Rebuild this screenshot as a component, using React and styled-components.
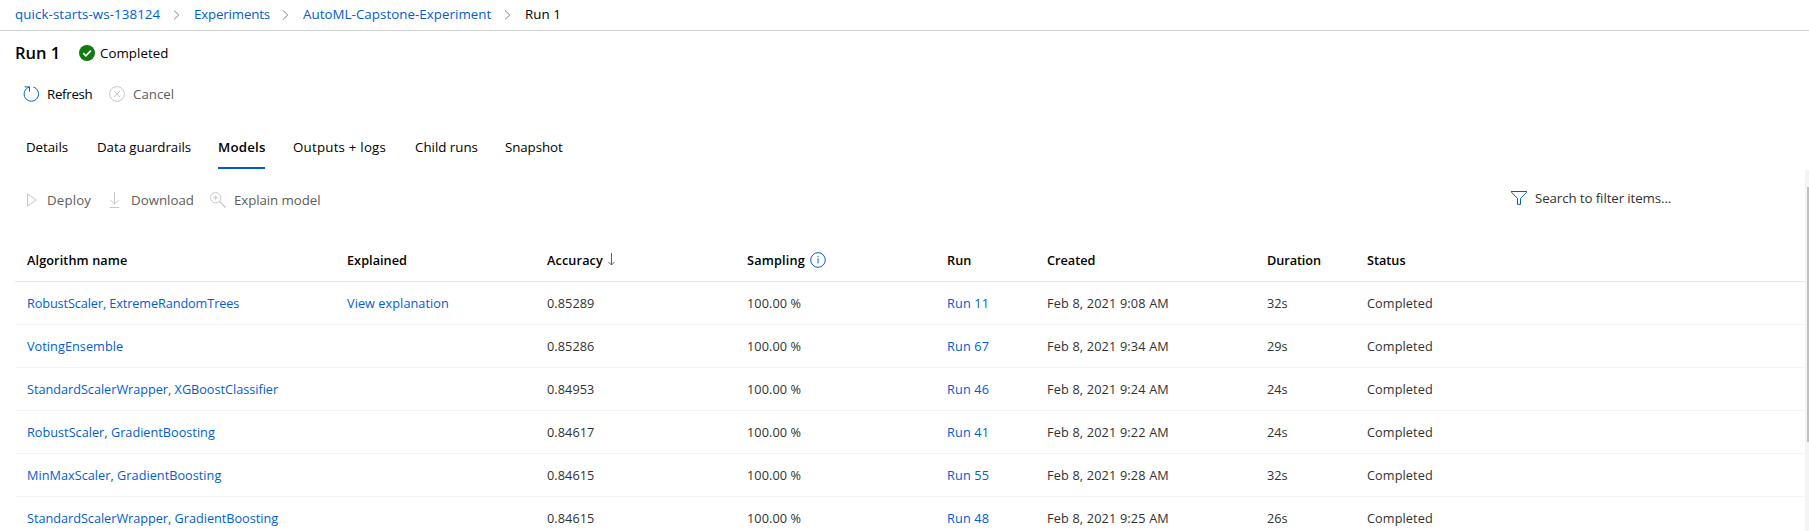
import React from "react";
import styled, { createGlobalStyle } from "styled-components";

const LINK = "#015cda";
const MUTED = "#605e5c";

const GlobalStyle = createGlobalStyle`
  *, *::before, *::after { box-sizing: border-box; }
  body {
    margin: 0;
    background: #fff;
    color: #000;
    font-family: "Open Sans", "Noto Sans", sans-serif;
    font-size: 13.3px;
    line-height: 20px;
    overflow: hidden;
  }
`;

const Page = styled.div`
  display: flex;
  flex-direction: column;
  height: 531px;
  overflow: hidden;
  white-space: nowrap;
`;

const Label = styled.span`
  letter-spacing: ${(p) => p.$track || 0}px;
`;

const Breadcrumb = styled.nav`
  display: flex;
  align-items: center;
  flex: none;
  height: 31px;
  padding: 0 0 2px 15px;
  border-bottom: 1px solid #d2d2d2;
`;

const Crumb = styled.span`
  flex: none;
  width: ${(p) => p.$width}px;
  color: ${(p) => (p.$current ? "#000" : LINK)};
`;

const CrumbIcon = styled.svg`
  flex: none;
  width: 7px;
  height: 10px;
  margin: 1px 14px 0;
  fill: none;
  stroke: #8a8886;
`;

const TitleRow = styled.header`
  display: flex;
  align-items: center;
  flex: none;
  height: 20px;
  margin-top: 12px;
  padding-left: 15px;
`;

const Title = styled.h1`
  width: 64px;
  margin: 0;
  font-size: 16.5px;
  font-weight: 600;
  line-height: 20px;
`;

const Icon = styled.svg`
  flex: none;
  width: 16px;
  height: 16px;
  fill: none;
  stroke: ${(p) => p.$color || "#c8c6c8"};
`;

const RunStatus = styled.div`
  display: flex;
  align-items: center;
  gap: 5px;
`;

const CommandBar = styled.div`
  display: flex;
  align-items: center;
  flex: none;
  height: 32px;
  margin-top: ${(p) => p.$top}px;
  padding-left: 23px;
`;

const Command = styled.button`
  display: flex;
  align-items: center;
  gap: 8px;
  flex: none;
  width: ${(p) => p.$width}px;
  height: 32px;
  padding: 0;
  border: 0;
  background: none;
  font: inherit;
  color: ${(p) => (p.$enabled ? "#000" : MUTED)};
`;

const Tabs = styled.div`
  display: flex;
  flex: none;
  gap: 28px;
  margin-top: 15px;
  padding-left: 26px;
`;

const Tab = styled.div`
  flex: none;
  width: ${(p) => p.$width}px;
  height: 44px;
  padding-top: 2px;
  line-height: 40px;
  font-weight: ${(p) => (p.$active ? 600 : 400)};
  border-bottom: 2px solid ${(p) => (p.$active ? LINK : "transparent")};
`;

const Panel = styled.main`
  display: flex;
  flex: 1;
  min-height: 0;
  margin-top: 1px;
`;

const PanelBody = styled.div`
  flex: 1;
  min-width: 0;
  overflow: hidden;
`;

const ScrollTrack = styled.div`
  display: flex;
  justify-content: flex-end;
  flex: none;
  width: 4px;
  padding-top: 17px;
  background: #f5f3f6;
`;

const ScrollThumb = styled.div`
  width: 2px;
  height: 255px;
  background: #c1bfc2;
`;

const Search = styled.div`
  display: flex;
  align-items: center;
  gap: 8px;
  width: 294px;
  height: 28px;
  margin: 0 0 4px auto;
  color: #323130;
`;

const Table = styled.div`
  margin: 23px 0 0 15px;
  font-size: 12.7px;
`;

const Row = styled.div`
  display: grid;
  grid-template-columns: 320px 200px 200px 200px 100px 220px 100px 1fr;
  align-items: center;
  height: 43px;
  color: ${(p) => (p.$head ? "#000" : "#323130")};
  font-weight: ${(p) => (p.$head ? 600 : 400)};
  border-bottom: 1px solid ${(p) => (p.$head ? "#e9e8e9" : "#f4f3f4")};
`;

const Cell = styled.div`
  display: flex;
  align-items: center;
  padding-left: 12px;
  letter-spacing: ${(p) => p.$track || 0}px;
  color: ${(p) => (p.$link ? LINK : "inherit")};
`;

const SortArrow = styled.svg`
  width: 7px;
  height: 13px;
  margin: -1px 0 0 5px;
  fill: none;
  stroke: #605e5c;
`;

const InfoIcon = styled(Icon)`
  margin: -1px 0 0 5px;
`;

const Chevron = () => (
  <CrumbIcon viewBox="0 0 7 10"><path d="M1 .5 5.8 5 1 9.5" /></CrumbIcon>
);

const tabs = [
  ["Details", 43, -0.04],
  ["Data guardrails", 93, -0.05],
  ["Models", 47, 0.18],
  ["Outputs + logs", 94, 0.22],
  ["Child runs", 62, 0],
  ["Snapshot", 60, -0.08],
];

const columns = [
  ["Algorithm name", 0.1],
  ["Explained", 0.03],
  ["Accuracy", 0.12],
  ["Sampling", 0.17],
  ["Run", 0.1],
  ["Created", 0],
  ["Duration", -0.07],
  ["Status", 0],
];

const models = [
  ["RobustScaler, ExtremeRandomTrees", -0.1, "View explanation", "0.85289", "Run 11", "9:08", "32s"],
  ["VotingEnsemble", 0.05, "", "0.85286", "Run 67", "9:34", "29s"],
  ["StandardScalerWrapper, XGBoostClassifier", -0.02, "", "0.84953", "Run 46", "9:24", "24s"],
  ["RobustScaler, GradientBoosting", 0.01, "", "0.84617", "Run 41", "9:22", "24s"],
  ["MinMaxScaler, GradientBoosting", 0.03, "", "0.84615", "Run 55", "9:28", "32s"],
  ["StandardScalerWrapper, GradientBoosting", -0.02, "", "0.84615", "Run 48", "9:25", "26s"],
];

export default function App() {
  return (
    <Page>
      <GlobalStyle />
      <Breadcrumb>
        <Crumb $width={144}><Label $track={0.1}>quick-starts-ws-138124</Label></Crumb>
        <Chevron />
        <Crumb $width={74}><Label $track={-0.16}>Experiments</Label></Crumb>
        <Chevron />
        <Crumb $width={187}><Label $track={0.06}>AutoML-Capstone-Experiment</Label></Crumb>
        <Chevron />
        <Crumb $width={40} $current><Label $track={0.08}>Run 1</Label></Crumb>
      </Breadcrumb>

      <TitleRow>
        <Title>Run 1</Title>
        <RunStatus>
          <Icon viewBox="0 0 16 16" $color="#fff">
            <circle cx="8" cy="8" r="8" fill="#107c10" stroke="none" />
            <path d="m4.2 8.1 2.7 2.7 5-5.1" strokeWidth="1.7" />
          </Icon>
          <Label $track={0.06}>Completed</Label>
        </RunStatus>
      </TitleRow>

      <CommandBar $top={15}>
        <Command $width={86} $enabled>
          <Icon viewBox="0 0 16 16" $color={LINK}>
            <path d="M1.7.9h4.8v4.8M6.3 1.1A7.2 7.2 0 1 0 10.4 1.1" />
          </Icon>
          <Label $track={-0.3}>Refresh</Label>
        </Command>
        <Command $width={70}>
          <Icon viewBox="0 0 16 16">
            <circle cx="8" cy="8" r="7.4" />
            <path d="m5 5 6 6M11 5l-6 6" />
          </Icon>
          <Label>Cancel</Label>
        </Command>
      </CommandBar>

      <Tabs>
        {tabs.map(([name, width, track]) => (
          <Tab key={name} $width={width} $active={name === "Models"}>
            <Label $track={track}>{name}</Label>
          </Tab>
        ))}
      </Tabs>

      <Panel>
        <PanelBody>
          <CommandBar $top={14}>
            <Command $width={84}>
              <Icon viewBox="0 0 16 16"><path d="M4.5 1.9v12.2L13.2 8z" /></Icon>
              <Label $track={0.15}>Deploy</Label>
            </Command>
            <Command $width={103}>
              <Icon viewBox="0 0 16 16"><path d="M7.5 0v12M3.5 8.2l4 4 4-4M2.7 15.5h9.6" /></Icon>
              <Label>Download</Label>
            </Command>
            <Command $width={120}>
              <Icon viewBox="0 0 16 16">
                <circle cx="5.7" cy="5.7" r="5.2" />
                <path d="M5.7 3.2v5M3.2 5.7h5" />
                <path d="m9.6 9.6 5.9 5.9" strokeWidth="1.3" />
              </Icon>
              <Label $track={-0.08}>Explain model</Label>
            </Command>
            <Search>
              <Icon viewBox="0 0 16 16" $color={LINK}>
                <path d="M.7 1.8v.7l5.8 5.9v6h3V8.4l5.8-5.9v-.7" />
                <path d="M0 1.5h16" />
              </Icon>
              <Label $track={-0.1}>Search to filter items...</Label>
            </Search>
          </CommandBar>

          <Table>
            <Row $head>
              {columns.map(([name, track]) => (
                <Cell key={name} $track={track}>
                  {name}
                  {name === "Accuracy" && (
                    <SortArrow viewBox="0 0 7 13"><path d="M3.5 0v12M.5 9l3 3 3-3" /></SortArrow>
                  )}
                  {name === "Sampling" && (
                    <InfoIcon viewBox="0 0 16 16" $color={LINK}>
                      <circle cx="8" cy="8" r="7.3" />
                      <path d="M8 6.5v5M8 4v1.2" />
                    </InfoIcon>
                  )}
                </Cell>
              ))}
            </Row>
            {models.map(([name, track, explained, accuracy, run, time, duration]) => (
              <Row key={name}>
                <Cell $link $track={track}>{name}</Cell>
                <Cell $link $track={0.07}>{explained}</Cell>
                <Cell $track={0.08}>{accuracy}</Cell>
                <Cell $track={0.1}>100.00 %</Cell>
                <Cell $link $track={0.15}>{run}</Cell>
                <Cell $track={0.17}>{`Feb 8, 2021 ${time} AM`}</Cell>
                <Cell>{duration}</Cell>
                <Cell $track={0.1}>Completed</Cell>
              </Row>
            ))}
          </Table>
        </PanelBody>
        <ScrollTrack><ScrollThumb /></ScrollTrack>
      </Panel>
    </Page>
  );
}
